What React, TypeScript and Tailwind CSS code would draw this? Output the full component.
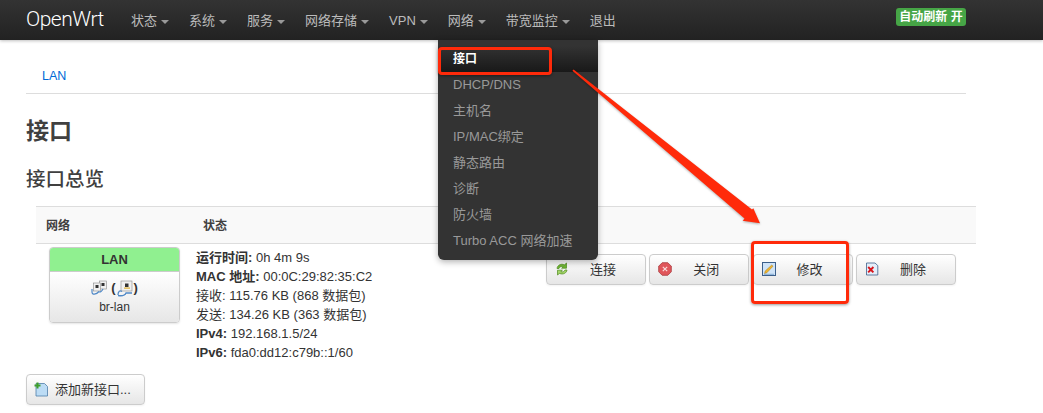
import { ReactNode } from 'react';

const FONT = "font-['Liberation_Sans','Noto_Sans_CJK_SC',sans-serif]";

const navItems = [
  { label: '状态', caret: true },
  { label: '系统', caret: true },
  { label: '服务', caret: true },
  { label: '网络存储', caret: true },
  { label: 'VPN', caret: true },
  { label: '网络', caret: true },
  { label: '带宽监控', caret: true },
  { label: '退出', caret: false },
];

const menuItems = ['DHCP/DNS', '主机名', 'IP/MAC绑定', '静态路由', '诊断', '防火墙', 'Turbo ACC 网络加速'];

const statusRows = [
  { key: '运行时间:', value: '0h 4m 9s', strong: true },
  { key: 'MAC 地址:', value: '00:0C:29:82:35:C2', strong: true },
  { key: '接收:', value: '115.76 KB (868 数据包)', strong: false },
  { key: '发送:', value: '134.26 KB (363 数据包)', strong: false },
  { key: 'IPv4:', value: '192.168.1.5/24', strong: true },
  { key: 'IPv6:', value: 'fda0:dd12:c79b::1/60', strong: true },
];

function ReloadIcon() {
  return (
    <svg width="14" height="14" viewBox="0 0 14 14" fill="none">
      <path d="M2 6.5C2.4 3.2 5.8 1.2 9.5 2.8L11.5 1V6.2H6.6L8.2 4.8C6.4 4 4.6 4.8 4 6.5Z" fill="#6fb534" stroke="#4d8a1c" strokeWidth="0.7" />
      <path d="M12 8C11.6 11 8.2 13 4.5 11.4L2.5 13V8.2H7.4L5.8 9.6C7.6 10.4 9.4 9.6 10 8Z" fill="#a3d568" stroke="#4d8a1c" strokeWidth="0.7" />
    </svg>
  );
}

function StopIcon() {
  return (
    <svg width="14" height="14" viewBox="0 0 14 14" fill="none">
      <path d="M4.2 0.7H9.8L13.3 4.2V9.8L9.8 13.3H4.2L0.7 9.8V4.2Z" fill="#e0565b" stroke="#a83a3e" strokeWidth="0.8" strokeLinejoin="round" />
      <path d="M4.8 4.8L9.2 9.2M9.2 4.8L4.8 9.2" stroke="#f8dcdc" strokeWidth="1.2" />
    </svg>
  );
}

function EditIcon() {
  return (
    <svg width="14" height="14" viewBox="0 0 14 14" fill="none">
      <rect x="0.5" y="0.5" width="13" height="13" fill="#cfe3f7" stroke="#3c5f8a" />
      <path d="M2.5 11.5L3.2 9L9.8 3L11 4.2L4.8 10.8Z" fill="#f0b52e" stroke="#a87a12" strokeWidth="0.5" />
      <path d="M2 12.3H12" stroke="#6f9ccc" strokeWidth="0.8" />
    </svg>
  );
}

function DeleteIcon() {
  return (
    <svg width="14" height="14" viewBox="0 0 14 14" fill="none">
      <path d="M1.5 1H10L12.8 3.6V13H1.5Z" fill="#e4eefa" stroke="#3c5f8a" strokeWidth="0.8" />
      <path d="M3.2 5L8.4 10.4M8.4 5L3.2 10.4" stroke="#d8141a" strokeWidth="1.9" />
    </svg>
  );
}

function AddIcon() {
  return (
    <svg width="15" height="15" viewBox="0 0 15 15" fill="none">
      <path d="M2 1.5H10.5L13.5 4.5V14H2Z" fill="#bcdcf5" stroke="#4f7ea8" strokeWidth="0.8" />
      <path d="M3.5 0.5V6.5M0.5 3.5H6.5" stroke="#3f9e2c" strokeWidth="2" />
    </svg>
  );
}

// two ethernet port glyphs joined by one cable
function PortsIcon() {
  return (
    <svg width="16" height="16" viewBox="0 0 16 16" fill="none">
      <rect x="8.5" y="1" width="7" height="8" fill="#f0f0f0" stroke="#8a8a8a" strokeWidth="0.6" />
      <rect x="10.5" y="3" width="3" height="3" fill="#333333" />
      <rect x="2.5" y="3" width="7" height="8" fill="#f0f0f0" stroke="#8a8a8a" strokeWidth="0.6" />
      <rect x="4.5" y="5" width="3" height="3" fill="#333333" />
      <path d="M1 9V12C1 15 5 15 8 11.5M8 11.5C9 13 11 11 12 9" stroke="#4f88c6" strokeWidth="1.2" />
    </svg>
  );
}

function BridgeIcon() {
  return (
    <svg width="16" height="17" viewBox="0 0 16 17" fill="none">
      <rect x="4" y="1" width="11" height="10" fill="#f0f0f0" stroke="#8a8a8a" strokeWidth="0.6" />
      <rect x="8" y="3.5" width="3.5" height="3.5" fill="#333333" />
      <rect x="7" y="7.5" width="6" height="1.2" fill="#e0b030" />
      <path d="M1 15C1 11 3 10 5 11.5M1 15.5C4 16 8 15.5 9 13H15" stroke="#4f88c6" strokeWidth="1.3" />
    </svg>
  );
}

function ActionButton({ icon, label }: { icon: ReactNode; label: string }) {
  return (
    <button className="relative flex h-[31px] w-[100px] items-center justify-center rounded-[4px] border border-[#ccc] bg-gradient-to-b from-white to-[#e6e6e6] pl-[14px] text-[13px] text-[#333] shadow-[0_1px_2px_rgba(0,0,0,0.05)]">
      <span className="absolute left-[8px] top-[7px]">{icon}</span>
      {label}
    </button>
  );
}

export default function App() {
  return (
    <div className={`relative h-[413px] w-[1043px] overflow-hidden bg-white text-[13px] text-[#333] ${FONT}`}>
      {/* top bar */}
      <div className="flex h-[40px] items-center bg-gradient-to-b from-[#333] to-[#222] pl-[26px] pr-[77px] shadow-[0_1px_3px_rgba(0,0,0,0.25)]">
        <a className="mr-[21px] w-[74px] font-['Roboto'] text-[21px] font-light tracking-[-0.5px] text-white">OpenWrt</a>
        <nav className="flex">
          {navItems.map((item) => (
            <span key={item.label} className="flex items-center gap-[4px] px-[10px] pt-px text-[#bbb]">
              {item.label}
              {item.caret && <span className="mt-[2px] h-0 w-0 border-x-[4px] border-t-[4px] border-x-transparent border-t-[#999]" />}
            </span>
          ))}
        </nav>
        <span className="ml-auto mb-[6px] flex h-[18px] w-[70px] items-center justify-center rounded-[3px] bg-[#46a546] text-[12px] font-bold text-white">
          自动刷新 开
        </span>
      </div>

      {/* page */}
      <div className="pl-[26px]">
        <div className="h-[54px] w-[940px] border-b border-[#ddd] pl-[16px] pt-[27px] text-[12.5px] leading-[18px] text-[#0069d6]">LAN</div>
        <h2 className="mt-[24px] text-[23px] font-bold leading-[27px] text-[#404040]">接口</h2>
        <h3 className="mt-[21px] text-[19.5px] font-medium leading-[27px] text-[#404040]">接口总览</h3>

        <div className="ml-[10px] mt-[13px] w-[940px]">
          <div className="flex h-[38px] items-center border-y border-[#ddd] bg-[#f9f9f9] pl-[10px] pt-px text-[12px] font-bold text-[#404040]">
            <span className="w-[157px]">网络</span>
            <span>状态</span>
          </div>
          <div className="flex">
            <div className="ml-[13px] mt-[3px] h-[76px] w-[131px] overflow-hidden rounded-[4px] border border-[#ccc] text-center shadow-[0_1px_2px_rgba(0,0,0,0.1)]">
              <div className="h-[24px] border-b border-[#ccc] bg-[#90f090] text-[13px] font-bold leading-[23px] text-[#333]">LAN</div>
              <div className="flex h-[51px] flex-col items-center bg-gradient-to-b from-white to-[#e6e6e6] pt-[7px] text-[12px] leading-[18px]">
                <span className="flex h-[18px] items-center gap-[1px] text-[13px] font-bold">
                  <PortsIcon />
                  <span className="ml-[3px]">(</span>
                  <BridgeIcon />
                  <span>)</span>
                </span>
                <span className="mt-px">br-lan</span>
              </div>
            </div>
            <div className="ml-[16px] mt-[4px] w-[350px] text-[13px] leading-[19px]">
              {statusRows.map((row) => (
                <div key={row.key}>
                  <span className={row.strong ? 'font-bold' : ''}>{row.key}</span> {row.value}
                </div>
              ))}
            </div>
            <div className="mt-[10px] flex gap-[3.3px]">
              <ActionButton icon={<ReloadIcon />} label="连接" />
              <ActionButton icon={<StopIcon />} label="关闭" />
              <ActionButton icon={<EditIcon />} label="修改" />
              <ActionButton icon={<DeleteIcon />} label="删除" />
            </div>
          </div>
        </div>

        <button className="mt-[12px] flex h-[31px] w-[119px] items-center gap-[6px] rounded-[4px] border border-[#ccc] bg-gradient-to-b from-white to-[#e6e6e6] pl-[7px] text-[13px] text-[#333] shadow-[0_1px_2px_rgba(0,0,0,0.05)]">
          <AddIcon />
          添加新接口...
        </button>
      </div>

      {/* open dropdown */}
      <div className="absolute left-[438px] top-[40px] w-[160px] rounded-b-[6px] bg-[#333] py-[6px] shadow-[0_2px_6px_rgba(0,0,0,0.3)]">
        <div className="h-[26px] bg-gradient-to-b from-[#333] to-[#191919] pl-[15px] text-[12px] font-bold leading-[26px] text-white">接口</div>
        {menuItems.map((item) => (
          <div key={item} className="h-[26px] whitespace-nowrap pl-[15px] text-[13px] leading-[26px] text-[#999]">
            {item}
          </div>
        ))}
      </div>

      {/* annotations on top of the screenshot */}
      <div className="absolute left-[438px] top-[47px] h-[28px] w-[114px] rounded-[4px] border-[3px] border-[#ff2a0a] shadow-[0_1px_3px_rgba(0,0,0,0.4)]" />
      <div className="absolute left-[751px] top-[241px] h-[63px] w-[98px] rounded-[4px] border-[3px] border-[#ff2a0a] shadow-[0_1px_3px_rgba(0,0,0,0.4)]" />
      <svg className="absolute left-[560px] top-[60px] drop-shadow-[0_1px_1px_rgba(0,0,0,0.3)]" width="210" height="175" viewBox="0 0 210 175" fill="none">
        <path d="M13.6 9.4L192 149.5L193.3 148.3L200 163.3L182.7 160.7L184.5 158.5L12.4 10.8Z" fill="#ff2a0a" />
      </svg>
    </div>
  );
}
